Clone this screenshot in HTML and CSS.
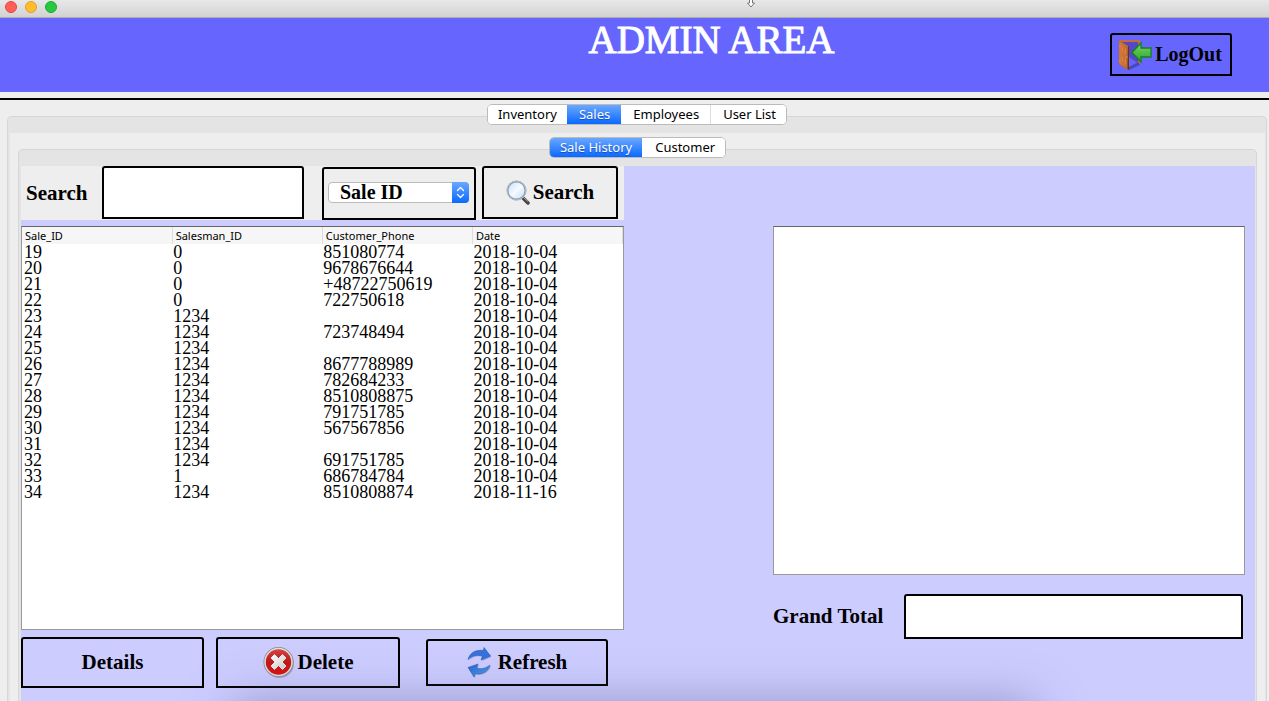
FILE: index.html
```html
<!DOCTYPE html>
<html lang="en">
<head>
<meta charset="utf-8">
<title>Admin Area</title>
<link rel="stylesheet" href="styles.css">
</head>
<body>
<div class="window">
  <div class="titlebar">
    <button class="light close" aria-label="Close"></button>
    <button class="light minimize" aria-label="Minimize"></button>
    <button class="light zoom" aria-label="Zoom"></button>
    <svg class="pointer" width="12" height="8" viewBox="0 0 12 8" aria-hidden="true"><path d="M4.500 -1V3H2.500L6 7L9.500 3H7.500V-1" fill="#fff" stroke="#777" stroke-width="1"/></svg>
  </div>
  <header class="banner">
    <h1 class="title">ADMIN AREA</h1>
    <button class="box logout">
      <svg width="34" height="32" viewBox="0 0 34 32" aria-hidden="true">
        <defs>
          <linearGradient id="wood" x1="0" x2="1"><stop offset="0" stop-color="#d87935"/><stop offset="1" stop-color="#c06a2e"/></linearGradient>
          <linearGradient id="leaf" x1="0" y1="0" x2="0" y2="1"><stop offset="0" stop-color="#7bd46c"/><stop offset="1" stop-color="#2ba52b"/></linearGradient>
        </defs>
        <path d="M1 1H22V25H20V3H3V25H1Z" fill="#c56a38"/>
        <path d="M4 3H20V24L12 19Z" fill="#5548c8"/>
        <path d="M11 31L22 26L20 23L11 28Z" fill="#4a48b8"/>
        <path d="M1 2L10 7V31L1 25Z" fill="url(#wood)" stroke="#b85f28" stroke-width=".6"/>
        <path d="M10 7L11 8V31L9.500 30Z" fill="#6b2f12"/>
        <path d="M3.500 6.500L5 7.500V14L3.500 13ZM6.500 8.500L8 9.500V16L6.500 15ZM3.500 17L5 18V24L3.500 23ZM6.500 19L8 20V26L6.500 25Z" fill="#e08a48" stroke="#c0682e" stroke-width=".4"/>
        <path d="M1 7H2.500M1 22H2.500M7.500 18H9.500" stroke="#999" stroke-width="1.500"/>
        <path d="M14 13.500L23 4V9H33V18H23V23Z" fill="url(#leaf)" stroke="#128318" stroke-width="1.300"/>
      </svg>
      <span>LogOut</span>
    </button>
  </header>
  <main class="workspace">
    <nav class="tabs main-tabs">
      <button class="tab">Inventory</button>
      <button class="tab selected">Sales</button>
      <button class="tab">Employees</button>
      <button class="tab">User List</button>
    </nav>
    <div class="pane outer">
      <div class="pane-body">
        <nav class="tabs sub-tabs">
          <button class="tab selected">Sale History</button>
          <button class="tab">Customer</button>
        </nav>
        <div class="pane inner">
          <div class="content">
            <section class="history">
              <form class="search">
                <label class="search-label" for="query">Search</label>
                <input class="box query" id="query" type="text">
                <div class="box field">
                  <div class="combo">
                    <select class="select" aria-label="Search field"><option>Sale ID</option></select>
                    <span class="stepper"><svg width="17" height="21" viewBox="0 0 17 21" aria-hidden="true"><path d="M5.500 8.500L8.500 5.500L11.500 8.500M5.500 12.500L8.500 15.500L11.500 12.500" fill="none" stroke="#fff" stroke-width="1.300" stroke-linecap="round" stroke-linejoin="round"/></svg></span>
                  </div>
                </div>
                <button class="box find" type="button">
                  <svg width="24" height="26" viewBox="0 0 24 26" aria-hidden="true">
                    <defs><linearGradient id="glass" x1="0" y1="0" x2="1" y2="1"><stop offset="0" stop-color="#c5dcf8"/><stop offset=".5" stop-color="#f4faff"/><stop offset="1" stop-color="#c6dbf7"/></linearGradient></defs>
                    <path d="M16 17L22 23" stroke="#444" stroke-width="3.500" stroke-linecap="round"/>
                    <path d="M17 17L22 21.500" stroke="#aaa" stroke-width="1"/>
                    <circle cx="10.500" cy="10.500" r="9" fill="url(#glass)" stroke="#8b9bb1" stroke-width="2"/>
                    <circle cx="10.500" cy="10.500" r="9.500" fill="none" stroke="#c8d0da" stroke-width=".7"/>
                  </svg>
                  <span>Search</span>
                </button>
              </form>
              <div class="table-frame">
                <table class="sales">
                  <thead><tr><th>Sale_ID</th><th>Salesman_ID</th><th>Customer_Phone</th><th>Date</th></tr></thead>
                  <tbody>
                    <tr><td>19</td><td>0</td><td>851080774</td><td>2018-10-04</td></tr>
                    <tr><td>20</td><td>0</td><td>9678676644</td><td>2018-10-04</td></tr>
                    <tr><td>21</td><td>0</td><td>+48722750619</td><td>2018-10-04</td></tr>
                    <tr><td>22</td><td>0</td><td>722750618</td><td>2018-10-04</td></tr>
                    <tr><td>23</td><td>1234</td><td></td><td>2018-10-04</td></tr>
                    <tr><td>24</td><td>1234</td><td>723748494</td><td>2018-10-04</td></tr>
                    <tr><td>25</td><td>1234</td><td></td><td>2018-10-04</td></tr>
                    <tr><td>26</td><td>1234</td><td>8677788989</td><td>2018-10-04</td></tr>
                    <tr><td>27</td><td>1234</td><td>782684233</td><td>2018-10-04</td></tr>
                    <tr><td>28</td><td>1234</td><td>8510808875</td><td>2018-10-04</td></tr>
                    <tr><td>29</td><td>1234</td><td>791751785</td><td>2018-10-04</td></tr>
                    <tr><td>30</td><td>1234</td><td>567567856</td><td>2018-10-04</td></tr>
                    <tr><td>31</td><td>1234</td><td></td><td>2018-10-04</td></tr>
                    <tr><td>32</td><td>1234</td><td>691751785</td><td>2018-10-04</td></tr>
                    <tr><td>33</td><td>1</td><td>686784784</td><td>2018-10-04</td></tr>
                    <tr><td>34</td><td>1234</td><td>8510808874</td><td>2018-11-16</td></tr>
                  </tbody>
                </table>
              </div>
              <div class="actions">
                <button class="box action">Details</button>
                <button class="box action">
                  <svg width="32" height="32" viewBox="0 0 32 32" aria-hidden="true">
                    <defs>
                      <linearGradient id="red" x1="0" y1="0" x2="0" y2="1"><stop offset="0" stop-color="#d84a48"/><stop offset=".5" stop-color="#c21818"/><stop offset="1" stop-color="#e01010"/></linearGradient>
                      <linearGradient id="cross" x1="0" y1="0" x2="1" y2="1"><stop offset="0" stop-color="#fff"/><stop offset="1" stop-color="#ccc"/></linearGradient>
                    </defs>
                    <circle cx="16.500" cy="16.500" r="14.500" fill="#777" opacity=".5"/>
                    <circle cx="15.500" cy="15" r="14" fill="url(#red)" stroke="#888" stroke-width="2"/>
                    <circle cx="15.500" cy="15" r="13.500" fill="none" stroke="#ddd" stroke-width="1.500"/>
                    <path d="M11.500 7.500L15.500 11.500L19.500 7.500L23 11L19 15L23 19L19.500 22.500L15.500 18.500L11.500 22.500L8 19L12 15L8 11Z" fill="url(#cross)" stroke="#e8e8e8" stroke-width="1" stroke-linejoin="round"/>
                  </svg>
                  <span>Delete</span>
                </button>
                <button class="box action refresh">
                  <svg width="26" height="32" viewBox="0 0 26 32" aria-hidden="true">
                    <defs><linearGradient id="blue" x1="0" y1="0" x2="1" y2="1"><stop offset="0" stop-color="#2a63cd"/><stop offset="1" stop-color="#4aa4f8"/></linearGradient></defs>
                    <g transform="translate(1 1)" fill="#606890" opacity=".4"><path d="M1 12.500C3 5.500 9 2.500 16.500 3.500L17 .5L23.500 9L14 13L15.500 9C10 7.500 5 8.500 1 12.500Z"/><path d="M23 18C21 25 14 28 8 26.500L7 30L1 20.500L11 17L9.500 21C14 22.500 19 21.500 23 18Z"/></g>
                    <path d="M1 12.500C3 5.500 9 2.500 16.500 3.500L17 .5L23.500 9L14 13L15.500 9C10 7.500 5 8.500 1 12.500Z" fill="#3672db" stroke="#2b59bc" stroke-width=".6"/>
                    <path d="M23 18C21 25 14 28 8 26.500L7 30L1 20.500L11 17L9.500 21C14 22.500 19 21.500 23 18Z" fill="url(#blue)" stroke="#315fae" stroke-width=".6"/>
                  </svg>
                  <span>Refresh</span>
                </button>
              </div>
            </section>
            <section class="receipt">
              <textarea class="details" aria-label="Sale details"></textarea>
              <div class="total">
                <label class="total-label" for="total">Grand Total</label>
                <input class="box total-value" id="total" type="text">
              </div>
            </section>
          </div>
        </div>
      </div>
    </div>
  </main>
  <div class="dock-shadow"></div>
</div>
</body>
</html>
```
FILE: styles.css
```css
* { box-sizing: border-box; }
body { margin: 0; background: #eee; color: #000; font-family: "Liberation Serif", serif; }
button, input, select, textarea { font: inherit; color: inherit; margin: 0; }
svg { display: block; flex: none; }

.window { position: relative; display: flex; flex-direction: column; height: 100vh; overflow: hidden; }

.titlebar { position: relative; display: flex; gap: 8px; height: 18px; padding: 1px 5px 0; background: linear-gradient(#e8e8e8, #d2d2d2); border-bottom: 1px solid #adadad; flex: none; }
.light { width: 12px; height: 12px; padding: 0; border-radius: 50%; border: 1px solid; }
.close { background: #ff5f57; border-color: #e2463f; }
.minimize { background: #ffbd2e; border-color: #e0a028; }
.zoom { background: #28c940; border-color: #1aab29; }
.pointer { position: absolute; left: 59%; top: 0; transform: translateX(-4px); }

.banner { display: grid; grid-template-columns: 1fr auto 1fr; height: 74px; padding: 0 37px 0 191px; background: #66f; flex: none; }
.title { grid-column: 2; margin: 0; color: #fff; font-size: 39px; font-weight: 400; line-height: 43px; white-space: nowrap; -webkit-text-stroke: 1px #fff; }

.box { border: 2px solid #000; border-radius: 3px 3px 0 0; background: transparent; font-size: 21px; font-weight: 700; }
button.box { display: flex; align-items: center; justify-content: center; gap: 3px; padding: 0; }
button.logout { justify-self: end; width: 122px; height: 43px; margin-top: 15px; padding-right: 2px; font-size: 20px; }

.workspace { display: flex; flex-direction: column; flex: 1; margin-top: 6px; padding: 4px 2px 0 7px; border-top: 2px solid #000; }
.tabs { position: relative; z-index: 1; display: flex; align-self: center; height: 21px; border: 1px solid #bbb; border-radius: 5px; background: #fff; overflow: hidden; }
.tab { padding: 0 11px; border: 0; background: #fff; font-family: "Noto Sans", sans-serif; font-size: 13px; line-height: 19px; white-space: nowrap; }
.tab:first-child { padding: 0 10px; }
.tab:last-child { padding: 0 10px 0 12px; }
.tab + .tab { border-left: 1px solid #ddd; }
.tab.selected { background: linear-gradient(#6aa8ff, #0a69ff); color: #fff; text-shadow: 0 1px 1px rgba(0, 0, 80, .4); }
.tab.selected, .tab.selected + .tab { border-left-color: transparent; }
.pane { display: flex; flex: 1; margin-top: -9px; border: solid #d6d6d6; border-width: 1px 1px 0; border-radius: 5px 5px 0 0; background: #e4e4e4; }
.outer { padding: 16px 1px 0 2px; }
.pane-body { display: flex; flex-direction: column; flex: 1; padding: 4px 8px 0; background: #eee; }
.inner { padding: 16px 1px 0 2px; }

.content { display: grid; grid-template-columns: 603fr 631fr; flex: 1; background: #ccf; }
.search { display: grid; grid-template-columns: 81fr 202fr 18fr 154fr 6fr 136fr 6fr; height: 54px; background: #eee; }
.search-label { align-self: center; padding-left: 5px; font-size: 21px; font-weight: 700; }
.query { width: 100%; height: 53px; background: #fff; }
.field { grid-column: 4; display: flex; align-items: center; height: 53px; margin-top: 1px; padding: 0 5px 3px 4px; font-size: 20px; }
.combo { position: relative; display: flex; width: 100%; height: 21px; border: 1px solid #bbb; border-radius: 4px; background: #fff; }
.select { appearance: none; width: 100%; padding: 0 20px 0 11px; border: 0; background: transparent; line-height: 19px; }
.stepper { position: absolute; top: -1px; right: -1px; border-radius: 0 4px 4px 0; background: linear-gradient(#6aa8ff, #0a69ff); pointer-events: none; }
.find { grid-column: 6; height: 53px; }

.table-frame { height: 404px; margin-top: 6px; border: 1px solid #999; border-top-color: #666; background: #fff; }
.sales { width: 100%; table-layout: fixed; border-collapse: collapse; }
.sales th { height: 17px; padding: 0 3px; background: #f6f6f6; border-right: 1px solid #ddd; font: 400 11px/16px "Noto Sans", sans-serif; text-align: left; }
.sales td { height: 16px; padding: 0 2px 0 1px; font-size: 18px; line-height: 16px; }
.sales td:first-child { padding-left: 2px; }

.actions { display: grid; grid-template-columns: 183fr 184fr 196fr; align-items: center; column-gap: 12px; margin-top: 7px; padding-right: 16px; }
.action { height: 51px; }
.refresh { height: 47px; margin-left: 14px; }
button.refresh { gap: 5px; }

.receipt { padding: 60px 10px 0 149px; }
.details { display: block; width: 100%; height: 349px; padding: 4px; border: 1px solid #999; border-top-color: #666; background: #fff; resize: none; }
.total { display: flex; align-items: center; margin-top: 19px; padding-right: 2px; }
.total-label { flex: none; width: 131px; font-size: 21px; font-weight: 700; }
.total-value { flex: 1; min-width: 0; height: 45px; background: #fff; }

.dock-shadow { position: absolute; left: 19%; right: 19%; bottom: -44px; height: 34px; box-shadow: 0 0 48px 6px rgba(80, 80, 130, .5); pointer-events: none; }
```
